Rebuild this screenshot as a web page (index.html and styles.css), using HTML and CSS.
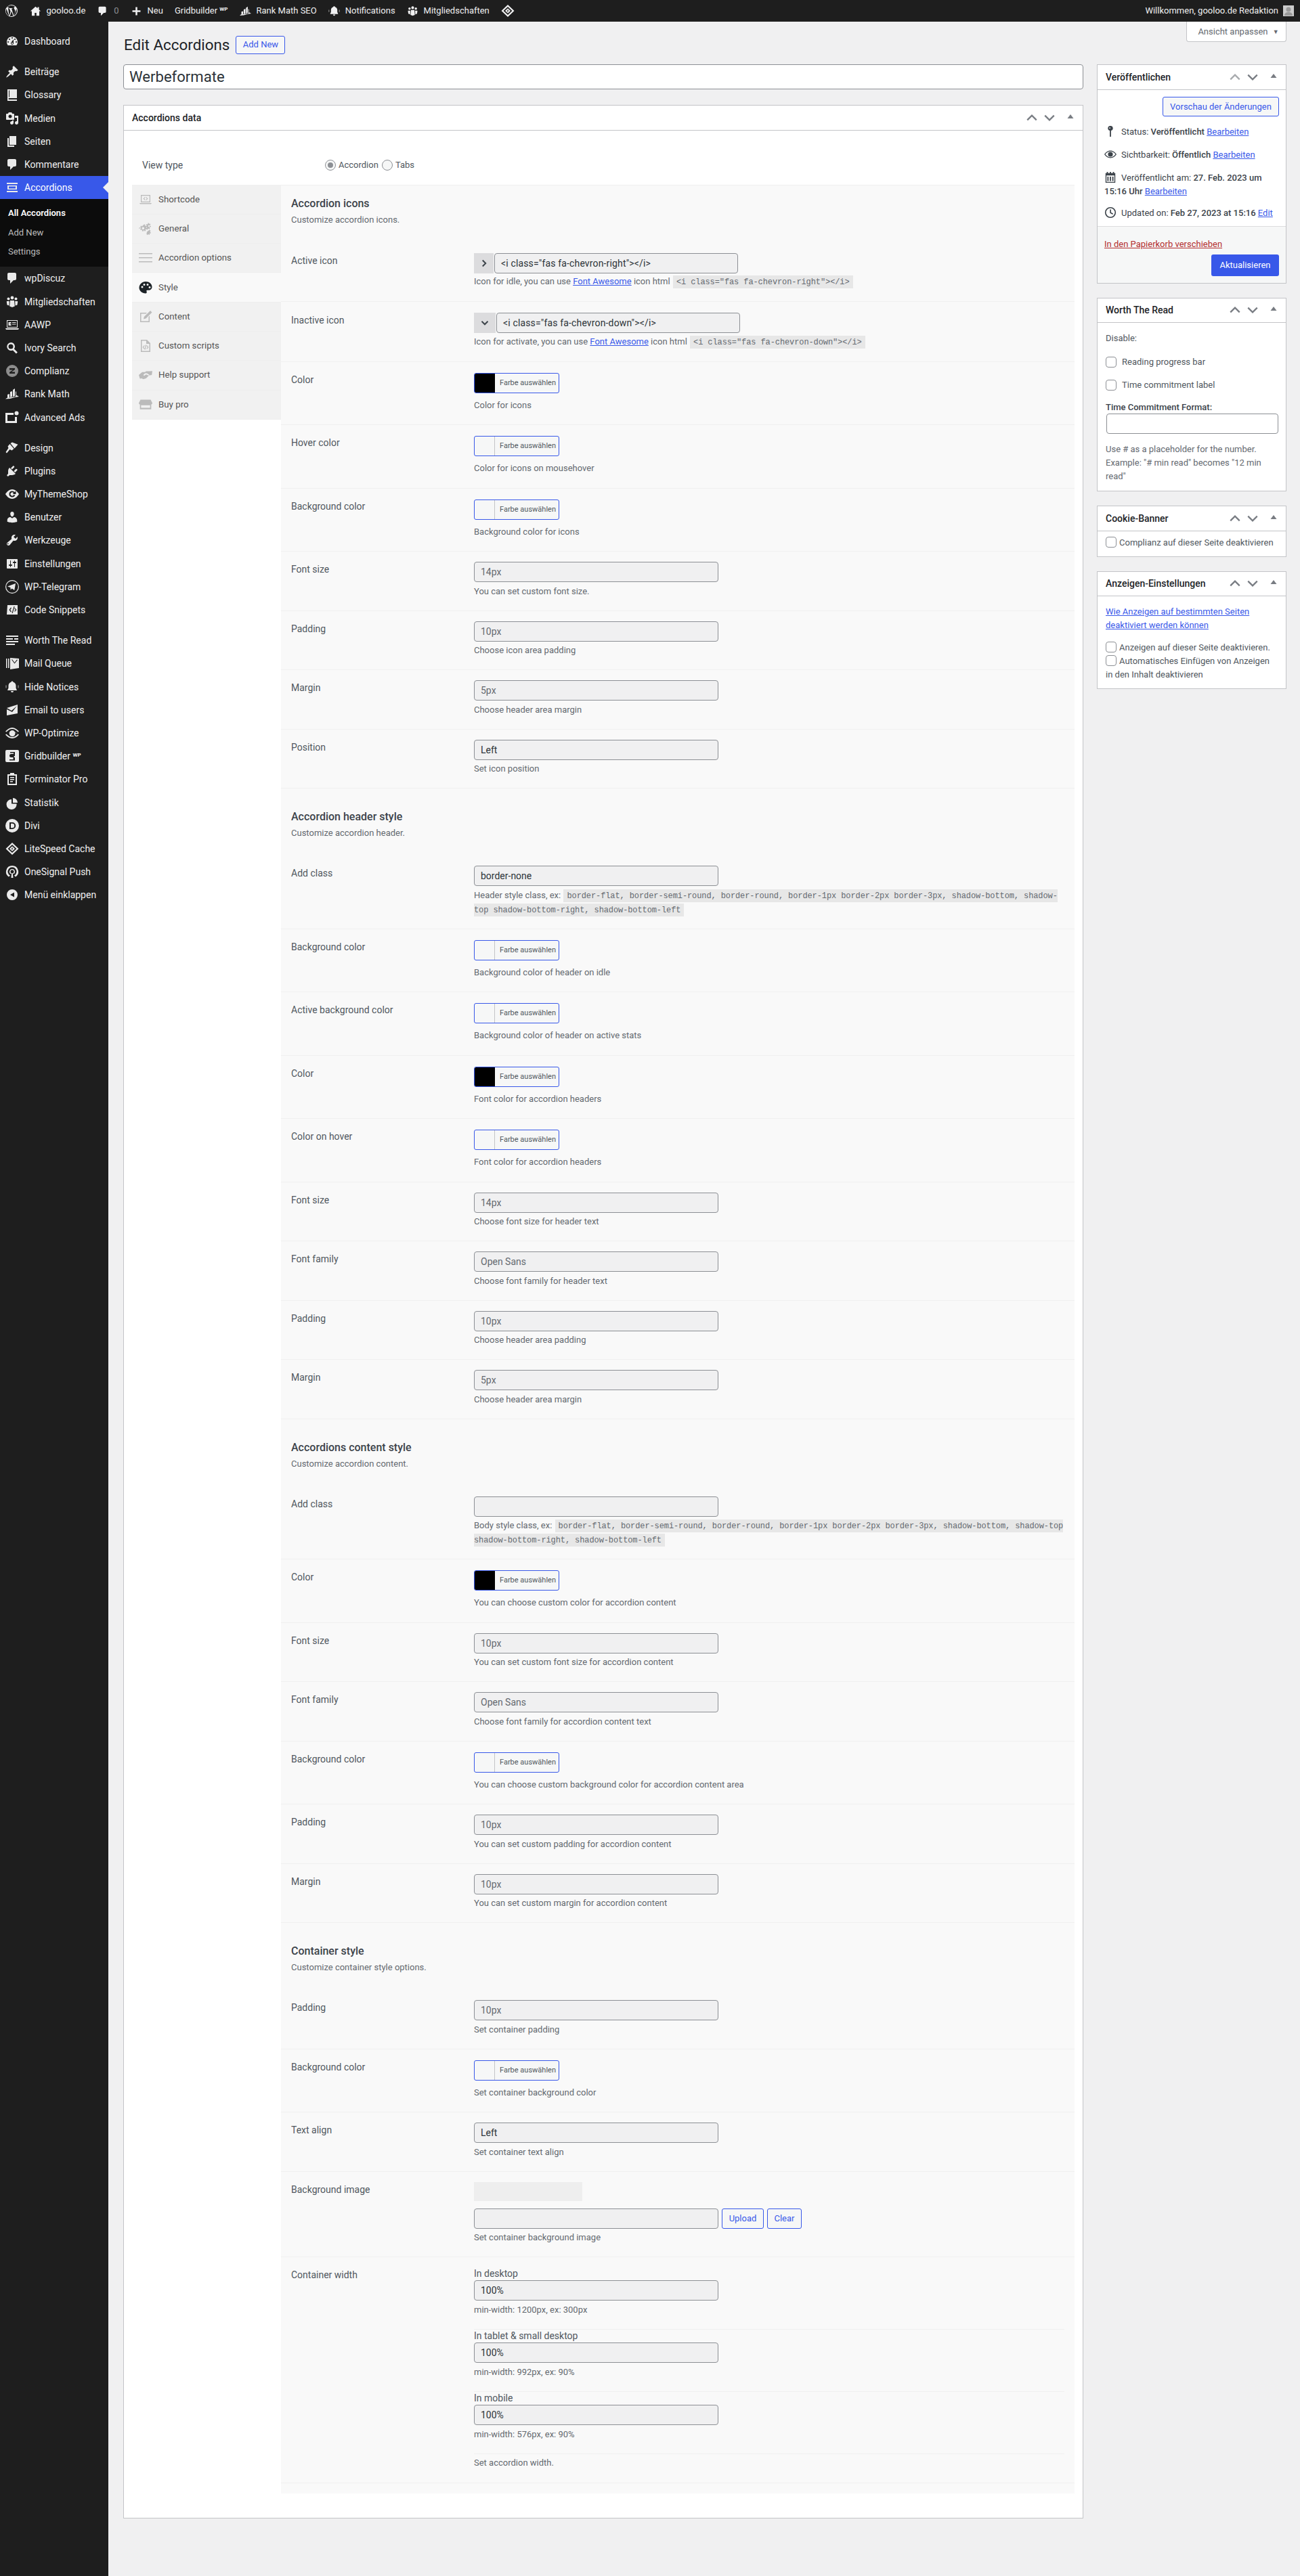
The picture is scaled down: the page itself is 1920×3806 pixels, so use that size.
FILE: index.html
```html
<!DOCTYPE html>
<html lang="de">
<head>
<meta charset="utf-8">
<title>Edit Accordions</title>
<link rel="stylesheet" href="styles.css">
</head>
<body>
<svg class="defs" aria-hidden="true">
  <symbol id="i-wp" viewBox="0 0 20 20"><path d="M10 1a9 9 0 1 0 0 18 9 9 0 0 0 0-18zm0 1a8 8 0 0 1 5.4 2.100c-1-.1-1.800.8-1.800 1.700 0 .8.500 1.500 1 2.300.4.700.8 1.600.8 2.800 0 .9-.3 1.900-.8 3.400l-1 3.100-3.500-10.500c.6 0 1.100-.1 1.100-.1.500-.1.500-.8 0-.8 0 0-1.600.1-2.600.1-1 0-2.500-.1-2.500-.1-.5 0-.6.700 0 .8 0 0 .5.100 1 .1l1.500 4.100-2.100 6.400L5 5.300c.6 0 1.100-.1 1.100-.1.500-.1.500-.8 0-.8 0 0-1.500.1-2.500.1h-.5A8 8 0 0 1 10 2zM2.500 7.100l3.800 10.500A8 8 0 0 1 2.500 7.100zm7.600 3.700 2.400 6.700v.1a8 8 0 0 1-4.900.1zm6.700-4.500A8 8 0 0 1 14 17l2.400-7c.5-1.200.6-2.100.6-2.900 0-.3 0-.6-.2-.8z"/></symbol>
  <symbol id="i-home" viewBox="0 0 20 20"><path d="M10 2 1 10h2.500v8h5v-5h3v5h5v-8H19l-3-2.700V3h-2.500v2.100z"/></symbol>
  <symbol id="i-plus" viewBox="0 0 20 20"><path d="M8.500 3h3v5.500H17v3h-5.500V17h-3v-5.500H3v-3h5.500z"/></symbol>
  <symbol id="i-rank" viewBox="0 0 20 20"><path d="M11 4l3-2v11l-3 1zM7 7l3-1v8l-3 1zM3 11l3-1v5l-3 1zM15 6l1 1v5l1.500.5L20 14l-6 1-7 2-7 .5 2-1.500 13-2z"/></symbol>
  <symbol id="i-bell" viewBox="0 0 20 20"><path d="M10 1.500c.8 0 1.400.5 1.500 1.200C14 3.400 15.500 5.500 15.500 8v3.500L17 15H3l1.500-3.500V8c0-2.500 1.500-4.600 4-5.300.1-.7.700-1.200 1.500-1.200zM8 16h4a2 2 0 0 1-4 0z"/><path d="M.5 7.500h1v4h-1zM18.500 7.500h1v4h-1z" opacity=".7"/></symbol>
  <symbol id="i-group" viewBox="0 0 20 20"><circle cx="10" cy="4" r="2.400"/><circle cx="4.500" cy="5.500" r="2"/><circle cx="15.500" cy="5.500" r="2"/><path d="M7 8h6l.8 8.500L10 18l-3.800-1.500zM2 9h3.800l-.4 6.500L2.500 14.500 1.800 10zM14.200 9H18l.2 1-.7 4.500-2.900 1z"/></symbol>
  <symbol id="i-diamond" viewBox="0 0 20 20"><path fill-rule="evenodd" d="M10 1 19.500 10 10 19 .5 10zm0 3-6.400 6L10 16l6.400-6zm0 2.200 4 3.800-4 3.800-4-3.800zm.6 1.300-2 3h1.200l-.5 2 2-3h-1.200z"/></symbol>
  <symbol id="i-dash" viewBox="0 0 20 20"><path d="M3.760 16h12.480c1.100-1.370 1.760-3.110 1.760-5 0-4.420-3.580-8-8-8s-8 3.580-8 8c0 1.890.66 3.630 1.760 5zM10 4c.55 0 1 .45 1 1s-.45 1-1 1-1-.45-1-1 .45-1 1-1zM6 6c.55 0 1 .45 1 1s-.45 1-1 1-1-.45-1-1 .45-1 1-1zm8 0c.55 0 1 .45 1 1s-.45 1-1 1-1-.45-1-1 .45-1 1-1zm-5.370 5.550L12 7v6c0 1.100-.9 2-2 2s-2-.9-2-2c0-.57.24-1.080.63-1.450zM4 10c.55 0 1 .45 1 1s-.45 1-1 1-1-.45-1-1 .45-1 1-1zm12 0c.55 0 1 .45 1 1s-.45 1-1 1-1-.45-1-1 .45-1 1-1zm-5 3c0-.55-.45-1-1-1s-1 .45-1 1 .45 1 1 1 1-.45 1-1z"/></symbol>
  <symbol id="i-pin" viewBox="0 0 20 20"><path d="M10.440 3.020l1.820-1.820 6.360 6.350-1.830 1.820c-1.050-.68-2.480-.57-3.410.36l-.75.750c-.92.93-1.040 2.350-.35 3.410l-1.830 1.820-2.410-2.410-2.800 2.790c-.42.42-3.380 2.710-3.800 2.290s1.860-3.390 2.280-3.810l2.790-2.790L4.100 9.360l1.830-1.820c1.050.69 2.480.57 3.400-.36l.75-.75c.93-.92 1.050-2.350.36-3.410z"/></symbol>
  <symbol id="i-book" viewBox="0 0 20 20"><path fill-rule="evenodd" d="M3 2h14v13H5.500a.9.9 0 0 0 0 2H17v2H3zm2 1.500v10h1v-10z"/></symbol>
  <symbol id="i-media" viewBox="0 0 20 20"><path d="M13 11V4c0-.55-.45-1-1-1h-1.670L9 1H5L3.670 3H2c-.55 0-1 .45-1 1v7c0 .55.45 1 1 1h10c.55 0 1-.45 1-1zM7 4.500c1.380 0 2.500 1.120 2.500 2.500S8.380 9.500 7 9.500 4.500 8.380 4.500 7 5.620 4.500 7 4.500zM14 6h5v10.500c0 1.380-1.120 2.500-2.500 2.500S14 17.880 14 16.500s1.120-2.500 2.500-2.500c.17 0 .34.020.5.050V9h-3V6zm-4 8.050V13h2v3.500c0 1.380-1.120 2.500-2.500 2.500S7 17.880 7 16.500 8.120 14 9.500 14c.17 0 .34.020.5.050z"/></symbol>
  <symbol id="i-page" viewBox="0 0 20 20"><path d="M6 15V2h10v13H6zm-1 1h8v2H3V5h2v11z"/></symbol>
  <symbol id="i-comment" viewBox="0 0 20 20"><path d="M5 2h9c1.100 0 2 .9 2 2v7c0 1.100-.9 2-2 2h-2l-5 5v-5H5c-1.100 0-2-.9-2-2V4c0-1.100.9-2 2-2z"/></symbol>
  <symbol id="i-acc" viewBox="0 0 20 20"><path fill-rule="evenodd" d="M2 3h16v2H2zM3 7h14v6H3zm2 1.500v3h10v-3zM2 15h16v2H2z"/></symbol>
  <symbol id="i-aawp" viewBox="0 0 20 20"><path fill-rule="evenodd" d="M2 3h16v11H2zm1 1v9h14V4zM0 15h20l-1 2H1zM4.500 6h4v2h-2v1h2v2h-4zM10 6h5.500v1H10zm0 2.500h5.500v1H10z"/></symbol>
  <symbol id="i-search" viewBox="0 0 20 20"><path fill-rule="evenodd" d="M8 2a6 6 0 0 1 4.900 9.400l5 5-2 2-5-5A6 6 0 1 1 8 2zm0 2.500a3.500 3.500 0 1 0 0 7 3.500 3.500 0 0 0 0-7z"/></symbol>
  <symbol id="i-cmplz" viewBox="0 0 20 20"><circle cx="10" cy="10" r="9" opacity=".55"/><path d="M6 6h8v2l-5 3.500h5V14H6v-2l5-3.500H6z" fill="#1e1e1e"/></symbol>
  <symbol id="i-ads" viewBox="0 0 20 20"><path fill-rule="evenodd" d="M0 3h12v3H3v9h11V9h3v9H0z"/><circle cx="16.500" cy="3.500" r="3"/></symbol>
  <symbol id="i-brush" viewBox="0 0 20 20"><path d="M7.500 3 10 1.500l8.500 3.300-5 5.700zM6.500 4l6 7-3 2.500-3-1.500L2 17.500 0.500 16 4.500 10 3.500 7.500z"/></symbol>
  <symbol id="i-plugin" viewBox="0 0 20 20"><path d="M13.110 4.360L9.870 7.600 8 5.730l3.240-3.240c.35-.34 1.050-.2 1.560.32.520.51.66 1.210.31 1.550zm-8 1.770l.91-1.120 9.010 9.010-1.190.84c-.71.71-2.630 1.160-3.820 1.160H6.140L4.900 17.260c-.59.59-1.540.59-2.120 0-.59-.58-.59-1.530 0-2.120l1.240-1.240v-3.880c0-1.130.4-3.190 1.090-3.890zm7.260 3.970l3.240-3.240c.34-.35 1.040-.21 1.550.31.520.51.66 1.210.31 1.550l-3.240 3.250z"/></symbol>
  <symbol id="i-mts" viewBox="0 0 20 20"><path fill-rule="evenodd" d="M10 3c5 0 8 4 10 7-2 3-5 7-10 7S2 13 0 10c2-3 5-7 10-7zm0 2.500a4.500 4.500 0 1 0 4.300 5.800h-2.100A2.500 2.500 0 1 1 12 8.500l-1 1.500h4.500V5.500L13.600 7A4.500 4.500 0 0 0 10 5.500z"/></symbol>
  <symbol id="i-user" viewBox="0 0 20 20"><path d="M10 9.250c-2.270 0-2.730-3.440-2.730-3.440C7 4.020 7.820 2 9.970 2c2.160 0 2.980 2.020 2.710 3.810 0 0-.41 3.440-2.680 3.440zm0 2.570L12.720 10c2.390 0 4.520 2.330 4.520 4.530v2.490s-3.650 1.130-7.240 1.130c-3.650 0-7.240-1.130-7.240-1.130v-2.490c0-2.250 1.940-4.480 4.470-4.480z"/></symbol>
  <symbol id="i-wrench" viewBox="0 0 20 20"><path d="M16.680 9.770c-1.340 1.340-3.300 1.670-4.950.99l-5.410 6.520c-.99.99-2.590.99-3.570 0-.99-.98-.99-2.580 0-3.570l6.520-5.420c-.68-1.650-.35-3.610.99-4.950 1.280-1.280 3.120-1.620 4.720-1.060l-2.890 2.890 2.820 2.820 2.860-2.870c.53 1.580.18 3.400-1.090 4.670zM4.360 16.050c.36-.36.36-.94 0-1.290-.36-.36-.94-.36-1.290 0-.36.35-.36.93 0 1.290.35.35.93.35 1.290 0z"/></symbol>
  <symbol id="i-sliders" viewBox="0 0 20 20"><path d="M18 16V4c0-.55-.45-1-1-1H3c-.55 0-1 .45-1 1v12c0 .55.45 1 1 1h14c.55 0 1-.45 1-1zM8 11h1c.55 0 1 .45 1 1s-.45 1-1 1H8v1.500c0 .28-.22.5-.5.5s-.5-.22-.5-.5V13H6c-.55 0-1-.45-1-1s.45-1 1-1h1V5.500c0-.28.22-.5.5-.5s.5.22.5.5V11zm5-2h-1c-.55 0-1-.45-1-1s.45-1 1-1h1V5.500c0-.28.22-.5.5-.5s.5.22.5.5V7h1c.55 0 1 .45 1 1s-.45 1-1 1h-1v5.500c0 .28-.22.5-.5.5s-.5-.22-.5-.5V9z"/></symbol>
  <symbol id="i-tele" viewBox="0 0 20 20"><path fill-rule="evenodd" d="M10 0a10 10 0 1 1 0 20 10 10 0 0 1 0-20zm0 1.200a8.800 8.800 0 1 0 0 17.600 8.800 8.800 0 0 0 0-17.600zM15 5l-1.700 10-3.800-2.500-1.800 2-.3-3.500L3 9.500z"/></symbol>
  <symbol id="i-code" viewBox="0 0 20 20"><path fill-rule="evenodd" d="M3 3h15v14H2zm5 3.500L5.500 10 8 13.500l1-.7L7.200 10 9 7.200zM12.500 5l-3 10h1.200l3-10zm1.500 2.300-.8.700L15 10l-1.800 2 .8.700L16.500 10z"/></symbol>
  <symbol id="i-lines" viewBox="0 0 20 20"><path d="M1 3h18v2H1zM1 7h10v2H1zM13 7h6v2h-6zM1 11h18v2H1zM1 15h13v2H1z"/></symbol>
  <symbol id="i-mail" viewBox="0 0 20 20"><path fill-rule="evenodd" d="M1 3h1.500v14H1zM4 3h1.500v14H4zM7 2l13 1v14L7 19zm2 2.500 4.500 6L18 5l-1-.5-3.500 4.500L10 4.200z"/></symbol>
  <symbol id="i-send" viewBox="0 0 20 20"><path d="M2 7l7 4 8-7-7 9L2 9v9l16-3V2L2 7z"/></symbol>
  <symbol id="i-opt" viewBox="0 0 20 20"><path fill-rule="evenodd" d="M10 2c4 0 7 2.500 10 5.500l-1.500 1C16 6 13.500 4 10 4S4 6 1.500 8.500L0 7.500C3 4.500 6 2 10 2zm0 4a4.500 4.500 0 0 1 3.900 2.300L20 12.500C17 15.500 14 18 10 18S3 15.500 0 12.500l1.500-1C4 14 6.500 16 10 16s6-2 8.500-4.500L14.300 9A4.500 4.500 0 1 1 10 6z"/></symbol>
  <symbol id="i-grid" viewBox="0 0 20 20"><path fill-rule="evenodd" d="M2 1h16a2 2 0 0 1 2 2v14a2 2 0 0 1-2 2H2a2 2 0 0 1-2-2V3a2 2 0 0 1 2-2zm5 3v1.500h5V7H8.500a2.500 2.500 0 0 0 0 5h3V15H6v1.500h8V12h-2a1 1 0 0 0 0-2h2V4z"/></symbol>
  <symbol id="i-form" viewBox="0 0 20 20"><path fill-rule="evenodd" d="M7 1h6v2h4v16H3V3h4zM5 5v12h10V5zm2 2h6v1.500H7zm0 3h6v1.500H7zm0 3h4v1.500H7z"/></symbol>
  <symbol id="i-pie" viewBox="0 0 20 20"><path d="M11 3a7 7 0 0 1 7 7h-7zM9 5v6.500h7.500A7.500 7.500 0 1 1 9 5z"/></symbol>
  <symbol id="i-divi" viewBox="0 0 20 20"><path fill-rule="evenodd" d="M10 0a10 10 0 1 1 0 20 10 10 0 0 1 0-20zM6 5v10h4.200a5 5 0 0 0 0-10zm2 1.800h2a3.200 3.200 0 0 1 0 6.400H8z"/></symbol>
  <symbol id="i-one" viewBox="0 0 20 20"><path fill-rule="evenodd" d="M10 1a9 9 0 0 1 5 16.500l-2-2a6.500 6.500 0 1 0-6 0l-2 2A9 9 0 0 1 10 1zm0 5a4 4 0 0 1 2 7.500l-.9-1.400a2.500 2.500 0 1 0-2.200 0L8 13.500A4 4 0 0 1 10 6zm-.8 6h1.600l.7 7H8.500z"/></symbol>
  <symbol id="i-collapse" viewBox="0 0 20 20"><path fill-rule="evenodd" d="M10 2a8 8 0 1 1 0 16 8 8 0 0 1 0-16zm3 4.500L7 10l6 3.500z"/></symbol>
  <symbol id="i-screen" viewBox="0 0 20 20"><path fill-rule="evenodd" d="M3 3h14v11H3zm1.200 1.200v8.600h11.600V4.200zM1 15h18l-1 1.500H2zM9 6 6.500 8.500 9 11l.7-.7L8 8.500l1.700-1.800zm2 0-.7.700L12 8.500l-1.700 1.800.7.700 2.500-2.500z"/></symbol>
  <symbol id="i-gears" viewBox="0 0 22 20"><path d="M7 4l1 .2.500-1.700 2 .8-.5 1.600.8.700 1.600-.8 1 1.900-1.500.9.100 1 1.700.5-.7 2-1.700-.5-.6.800.8 1.600-1.900 1-.9-1.500-1 .1-.5 1.700-2-.7.500-1.700-.8-.6-1.600.8-1-1.900 1.500-.9v-1L.3 9.900l.7-2 1.700.5.600-.8-.8-1.600 1.900-1 .9 1.500zm0 3.200a2 2 0 1 0 0 4 2 2 0 0 0 0-4zM16.500 1l.7 1.300 1.300-.5.600 1.400-1.200.8.300 1.400 1.400.3-.2 1.500-1.500.1-.6 1.300.9 1.100-1.200 1-1.100-1-1.300.5-.3 1.400-1.300-.3V7.500l-.5-1 .7-.6-.3-1.400-1.100-.7.700-1.400 1.300.4 1-.9.300-1.500zm0 3.300a1.300 1.300 0 1 0 0 2.600 1.300 1.300 0 0 0 0-2.600zM17 11.500l.6 1.100 1.200-.2.400 1.300-1 .8.300 1.200 1.200.4-.3 1.300-1.200-.1-.8 1 .5 1.100-1.200.6-.8-1-1.300.1-.5 1.100-1.200-.5.200-1.200-.9-.8 1-1.200-.4-1.200 1.200-.5.300-1.200 1.200.1z"/></symbol>
  <symbol id="i-list" viewBox="0 0 20 20"><path d="M0 3h20v1.500H0zM0 9h20v1.500H0zM0 15h20v1.500H0z"/></symbol>
  <symbol id="i-palette" viewBox="0 0 20 20"><path fill-rule="evenodd" d="M10 1c5.500 0 9.500 3.500 9.500 8 0 3-2.300 4.800-5 4.800h-2c-1 0-1.500.8-1 1.600.5.900.4 3.100-1.500 3.100C4.800 18.500.5 14.800.5 10 .5 5 5 1 10 1zM5 7.500a1.500 1.500 0 1 0 0 3 1.500 1.500 0 0 0 0-3zm3-3.500a1.500 1.500 0 1 0 0 3 1.500 1.500 0 0 0 0-3zm5 0a1.500 1.500 0 1 0 0 3 1.500 1.500 0 0 0 0-3zm3 4a1.500 1.500 0 1 0 0 3 1.500 1.500 0 0 0 0-3z"/></symbol>
  <symbol id="i-edit" viewBox="0 0 20 20"><path fill-rule="evenodd" d="M2 4h10l-1.500 1.500H3.500v11h11V10l1.500-1.500V18H2zM17 1l2.500 2.500-9 9L7 13.500l.8-3.500z"/></symbol>
  <symbol id="i-file" viewBox="0 0 20 20"><path fill-rule="evenodd" d="M3 1h9l5 5v13H3zm1.500 1.500v15h11V7H11V2.500zM8 9l-2.500 3L8 15l.8-.7L7 12l1.800-2.300zm4 0-.8.700L13 12l-1.800 2.300.8.700 2.500-3zm-2-.5-1.500 7h1.200l1.500-7z"/></symbol>
  <symbol id="i-hands" viewBox="0 0 24 20"><path d="M0 10l6-5 5 0 2-1.500 4 0 7-.5-1 7-5 1-5 5-5 1.500-3-1.500-3 .5zM11 7l-3 3 1.500 1.500L13 9l4 2 2-1-4.500-3z"/></symbol>
  <symbol id="i-store" viewBox="0 0 24 20"><path fill-rule="evenodd" d="M3 1h18l3 6c0 1.500-1.200 2.500-2 2.500v8.500H2V9.500C1.200 9.500 0 8.500 0 7zm1 10v4.500h16V11z"/></symbol>
  <symbol id="i-key" viewBox="0 0 20 20"><path d="M10 1a4 4 0 0 1 1 7.900V19H9V8.900A4 4 0 0 1 10 1zM9 3.500a1 1 0 1 0 0 2 1 1 0 0 0 0-2z"/></symbol>
  <symbol id="i-eye" viewBox="0 0 20 20"><path fill-rule="evenodd" d="M10 4c4.500 0 8 3 10 6-2 3-5.500 6-10 6S2 13 0 10c2-3 5.500-6 10-6zm0 1.300c-3.500 0-6.500 2.200-8.300 4.700 1.800 2.500 4.800 4.700 8.300 4.700s6.500-2.200 8.300-4.700c-1.800-2.500-4.800-4.700-8.300-4.700zM10 6a4 4 0 1 1 0 8 4 4 0 0 1 0-8z"/></symbol>
  <symbol id="i-cal" viewBox="0 0 20 20"><path fill-rule="evenodd" d="M2 3h2V1h2v2h3V1h2v2h3V1h2v2h2v16H2zm1.500 4v10.500h13V7zM5 9h2v7H5zm4 0h2v7H9zm4 0h2v7h-2z"/></symbol>
  <symbol id="i-clock" viewBox="0 0 20 20"><path fill-rule="evenodd" d="M10 1a9 9 0 1 1 0 18 9 9 0 0 1 0-18zm0 1.800a7.200 7.200 0 1 0 0 14.400 7.200 7.200 0 0 0 0-14.400zM9.200 5H11v4.800l3.500 2-.9 1.500-4.400-2.500z"/></symbol>
  <symbol id="i-up" viewBox="0 0 16 16"><path d="M2 11l6-6 6 6" fill="none" stroke="currentColor" stroke-width="2"/></symbol>
  <symbol id="i-down" viewBox="0 0 16 16"><path d="M2 5l6 6 6-6" fill="none" stroke="currentColor" stroke-width="2"/></symbol>
  <symbol id="i-tri" viewBox="0 0 16 16"><path d="M8 4l4.500 6h-9z"/></symbol>
  <symbol id="i-cr" viewBox="0 0 16 16"><path d="M5 2l6 6-6 6" fill="none" stroke="currentColor" stroke-width="2.600"/></symbol>
  <symbol id="i-cd" viewBox="0 0 16 16"><path d="M2 5l6 6 6-6" fill="none" stroke="currentColor" stroke-width="2.600"/></symbol>
  <symbol id="i-avatar" viewBox="0 0 16 16"><path d="M0 0h16v16H0z" fill="#ccc"/><circle cx="8" cy="6" r="3.500" fill="#999"/><path d="M2 15c0-4 3-5 6-5s6 1 6 5z" fill="#999"/></symbol>
</svg>

<header class="adminbar">
  <a class="ab ab-first"><svg class="ab-i ab-big"><use href="#i-wp"/></svg></a>
  <a class="ab"><svg class="ab-i"><use href="#i-home"/></svg><span>gooloo.de</span></a>
  <a class="ab"><svg class="ab-i"><use href="#i-comment"/></svg><span class="ab-zero">0</span></a>
  <a class="ab"><svg class="ab-i"><use href="#i-plus"/></svg><span>Neu</span></a>
  <a class="ab"><span>Gridbuilder <sup class="wp-sup">WP</sup></span></a>
  <a class="ab"><svg class="ab-i"><use href="#i-rank"/></svg><span>Rank Math SEO</span></a>
  <a class="ab"><svg class="ab-i"><use href="#i-bell"/></svg><span>Notifications</span></a>
  <a class="ab"><svg class="ab-i"><use href="#i-group"/></svg><span>Mitgliedschaften</span></a>
  <a class="ab"><svg class="ab-i ab-big"><use href="#i-diamond"/></svg></a>
  <a class="ab ab-right"><span>Willkommen, gooloo.de Redaktion</span><svg class="ab-avatar"><use href="#i-avatar"/></svg></a>
</header>

<div class="wrap">
  <nav class="sidebar">
    <a class="mi"><svg><use href="#i-dash"/></svg><span>Dashboard</span></a>
    <div class="sep"></div>
    <a class="mi"><svg><use href="#i-pin"/></svg><span>Beiträge</span></a>
    <a class="mi"><svg><use href="#i-book"/></svg><span>Glossary</span></a>
    <a class="mi"><svg><use href="#i-media"/></svg><span>Medien</span></a>
    <a class="mi"><svg><use href="#i-page"/></svg><span>Seiten</span></a>
    <a class="mi"><svg><use href="#i-comment"/></svg><span>Kommentare</span></a>
    <a class="mi mi-active"><svg><use href="#i-acc"/></svg><span>Accordions</span></a>
    <div class="submenu">
      <a class="sub sub-on">All Accordions</a>
      <a class="sub">Add New</a>
      <a class="sub">Settings</a>
    </div>
    <a class="mi"><svg><use href="#i-comment"/></svg><span>wpDiscuz</span></a>
    <a class="mi"><svg><use href="#i-group"/></svg><span>Mitgliedschaften</span></a>
    <a class="mi"><svg><use href="#i-aawp"/></svg><span>AAWP</span></a>
    <a class="mi"><svg><use href="#i-search"/></svg><span>Ivory Search</span></a>
    <a class="mi"><svg><use href="#i-cmplz"/></svg><span>Complianz</span></a>
    <a class="mi"><svg><use href="#i-rank"/></svg><span>Rank Math</span></a>
    <a class="mi"><svg><use href="#i-ads"/></svg><span>Advanced Ads</span></a>
    <div class="sep"></div>
    <a class="mi"><svg><use href="#i-brush"/></svg><span>Design</span></a>
    <a class="mi"><svg><use href="#i-plugin"/></svg><span>Plugins</span></a>
    <a class="mi"><svg><use href="#i-mts"/></svg><span>MyThemeShop</span></a>
    <a class="mi"><svg><use href="#i-user"/></svg><span>Benutzer</span></a>
    <a class="mi"><svg><use href="#i-wrench"/></svg><span>Werkzeuge</span></a>
    <a class="mi"><svg><use href="#i-sliders"/></svg><span>Einstellungen</span></a>
    <a class="mi"><svg><use href="#i-tele"/></svg><span>WP-Telegram</span></a>
    <a class="mi"><svg><use href="#i-code"/></svg><span>Code Snippets</span></a>
    <div class="sep"></div>
    <a class="mi"><svg><use href="#i-lines"/></svg><span>Worth The Read</span></a>
    <a class="mi"><svg><use href="#i-mail"/></svg><span>Mail Queue</span></a>
    <a class="mi"><svg><use href="#i-bell"/></svg><span>Hide Notices</span></a>
    <a class="mi"><svg><use href="#i-send"/></svg><span>Email to users</span></a>
    <a class="mi"><svg><use href="#i-opt"/></svg><span>WP-Optimize</span></a>
    <a class="mi"><svg><use href="#i-grid"/></svg><span>Gridbuilder <sup class="wp-sup">WP</sup></span></a>
    <a class="mi"><svg><use href="#i-form"/></svg><span>Forminator Pro</span></a>
    <a class="mi"><svg><use href="#i-pie"/></svg><span>Statistik</span></a>
    <a class="mi"><svg><use href="#i-divi"/></svg><span>Divi</span></a>
    <a class="mi"><svg><use href="#i-diamond"/></svg><span>LiteSpeed Cache</span></a>
    <a class="mi"><svg><use href="#i-one"/></svg><span>OneSignal Push</span></a>
    <a class="mi"><svg><use href="#i-collapse"/></svg><span>Menü einklappen</span></a>
  </nav>

  <main class="main">
    <button class="screen-opt">Ansicht anpassen <span class="caret">▼</span></button>
    <div class="heading">
      <h1>Edit Accordions</h1>
      <a class="btn-add">Add New</a>
    </div>
    <div class="columns">
      <div class="col-left">
        <div class="title-input">Werbeformate</div>
        <section class="postbox">
          <div class="pb-head">
            <h2>Accordions data</h2>
            <div class="handles">
              <svg><use href="#i-up"/></svg><svg><use href="#i-down"/></svg><svg class="h-tri"><use href="#i-tri"/></svg>
            </div>
          </div>
          <div class="pb-body">
            <div class="view-type">
              <div class="view-label">View type</div>
              <div class="radios">
                <span class="radio radio-on"></span><span>Accordion</span>
                <span class="radio"></span><span>Tabs</span>
              </div>
            </div>
            <div class="panel">
              <ul class="tabs">
                <li class="tab"><svg><use href="#i-screen"/></svg>Shortcode</li>
                <li class="tab"><svg><use href="#i-gears"/></svg>General</li>
                <li class="tab"><svg><use href="#i-list"/></svg>Accordion options</li>
                <li class="tab tab-on"><svg><use href="#i-palette"/></svg>Style</li>
                <li class="tab"><svg><use href="#i-edit"/></svg>Content</li>
                <li class="tab"><svg><use href="#i-file"/></svg>Custom scripts</li>
                <li class="tab"><svg><use href="#i-hands"/></svg>Help support</li>
                <li class="tab"><svg><use href="#i-store"/></svg>Buy pro</li>
              </ul>
              <div class="content">

                <div class="sec sec-first"><h3>Accordion icons</h3><p>Customize accordion icons.</p></div>
                <div class="row row-icon">
                  <div class="lbl">Active icon</div>
                  <div>
                    <div class="icon-field"><span class="addon"><svg><use href="#i-cr"/></svg></span><div class="field field-i">&lt;i class="fas fa-chevron-right"&gt;&lt;/i&gt;</div></div>
                    <div class="hint hint-tight">Icon for idle, you can use <a>Font Awesome</a> icon html <code>&lt;i class="fas fa-chevron-right"&gt;&lt;/i&gt;</code></div>
                  </div>
                </div>
                <div class="row row-icon">
                  <div class="lbl">Inactive icon</div>
                  <div>
                    <div class="icon-field"><span class="addon addon-w"><svg><use href="#i-cd"/></svg></span><div class="field field-i">&lt;i class="fas fa-chevron-down"&gt;&lt;/i&gt;</div></div>
                    <div class="hint hint-tight">Icon for activate, you can use <a>Font Awesome</a> icon html <code>&lt;i class="fas fa-chevron-down"&gt;&lt;/i&gt;</code></div>
                  </div>
                </div>
                <div class="row row-sw"><div class="lbl">Color</div><div><div class="swatch"><span class="sw-c sw-black"></span><span class="sw-t">Farbe auswählen</span></div><div class="hint">Color for icons</div></div></div>
                <div class="row row-sw"><div class="lbl">Hover color</div><div><div class="swatch"><span class="sw-c"></span><span class="sw-t">Farbe auswählen</span></div><div class="hint">Color for icons on mousehover</div></div></div>
                <div class="row row-sw"><div class="lbl">Background color</div><div><div class="swatch"><span class="sw-c"></span><span class="sw-t">Farbe auswählen</span></div><div class="hint">Background color for icons</div></div></div>
                <div class="row"><div class="lbl">Font size</div><div><div class="field ph">14px</div><div class="hint">You can set custom font size.</div></div></div>
                <div class="row"><div class="lbl">Padding</div><div><div class="field ph">10px</div><div class="hint">Choose icon area padding</div></div></div>
                <div class="row"><div class="lbl">Margin</div><div><div class="field ph">5px</div><div class="hint">Choose header area margin</div></div></div>
                <div class="row"><div class="lbl">Position</div><div><div class="field">Left</div><div class="hint">Set icon position</div></div></div>

                <div class="sec"><h3>Accordion header style</h3><p>Customize accordion header.</p></div>
                <div class="row"><div class="lbl">Add class</div><div><div class="field">border-none</div><div class="hint">Header style class, ex: <code>border-flat, border-semi-round, border-round, border-1px border-2px border-3px, shadow-bottom, shadow-top shadow-bottom-right, shadow-bottom-left</code></div></div></div>
                <div class="row row-sw"><div class="lbl">Background color</div><div><div class="swatch"><span class="sw-c"></span><span class="sw-t">Farbe auswählen</span></div><div class="hint">Background color of header on idle</div></div></div>
                <div class="row row-sw"><div class="lbl">Active background color</div><div><div class="swatch"><span class="sw-c"></span><span class="sw-t">Farbe auswählen</span></div><div class="hint">Background color of header on active stats</div></div></div>
                <div class="row row-sw"><div class="lbl">Color</div><div><div class="swatch"><span class="sw-c sw-black"></span><span class="sw-t">Farbe auswählen</span></div><div class="hint">Font color for accordion headers</div></div></div>
                <div class="row row-sw"><div class="lbl">Color on hover</div><div><div class="swatch"><span class="sw-c"></span><span class="sw-t">Farbe auswählen</span></div><div class="hint">Font color for accordion headers</div></div></div>
                <div class="row"><div class="lbl">Font size</div><div><div class="field ph">14px</div><div class="hint">Choose font size for header text</div></div></div>
                <div class="row"><div class="lbl">Font family</div><div><div class="field ph">Open Sans</div><div class="hint">Choose font family for header text</div></div></div>
                <div class="row"><div class="lbl">Padding</div><div><div class="field ph">10px</div><div class="hint">Choose header area padding</div></div></div>
                <div class="row"><div class="lbl">Margin</div><div><div class="field ph">5px</div><div class="hint">Choose header area margin</div></div></div>

                <div class="sec"><h3>Accordions content style</h3><p>Customize accordion content.</p></div>
                <div class="row"><div class="lbl">Add class</div><div><div class="field"></div><div class="hint">Body style class, ex: <code>border-flat, border-semi-round, border-round, border-1px border-2px border-3px, shadow-bottom, shadow-top shadow-bottom-right, shadow-bottom-left</code></div></div></div>
                <div class="row row-sw"><div class="lbl">Color</div><div><div class="swatch"><span class="sw-c sw-black"></span><span class="sw-t">Farbe auswählen</span></div><div class="hint">You can choose custom color for accordion content</div></div></div>
                <div class="row"><div class="lbl">Font size</div><div><div class="field ph">10px</div><div class="hint">You can set custom font size for accordion content</div></div></div>
                <div class="row"><div class="lbl">Font family</div><div><div class="field ph">Open Sans</div><div class="hint">Choose font family for accordion content text</div></div></div>
                <div class="row row-sw"><div class="lbl">Background color</div><div><div class="swatch"><span class="sw-c"></span><span class="sw-t">Farbe auswählen</span></div><div class="hint">You can choose custom background color for accordion content area</div></div></div>
                <div class="row"><div class="lbl">Padding</div><div><div class="field ph">10px</div><div class="hint">You can set custom padding for accordion content</div></div></div>
                <div class="row"><div class="lbl">Margin</div><div><div class="field ph">10px</div><div class="hint">You can set custom margin for accordion content</div></div></div>

                <div class="sec"><h3>Container style</h3><p>Customize container style options.</p></div>
                <div class="row"><div class="lbl">Padding</div><div><div class="field ph">10px</div><div class="hint">Set container padding</div></div></div>
                <div class="row row-sw"><div class="lbl">Background color</div><div><div class="swatch"><span class="sw-c"></span><span class="sw-t">Farbe auswählen</span></div><div class="hint">Set container background color</div></div></div>
                <div class="row"><div class="lbl">Text align</div><div><div class="field">Left</div><div class="hint">Set container text align</div></div></div>
                <div class="row"><div class="lbl">Background image</div><div>
                  <div class="img-box"></div>
                  <div class="upload-line"><div class="field"></div><a class="btn-sm btn-up">Upload</a><a class="btn-sm btn-cl">Clear</a></div>
                  <div class="hint">Set container background image</div>
                </div></div>
                <div class="row row-width"><div class="lbl">Container width</div><div>
                  <div class="wblock"><div class="wlabel">In desktop</div><div class="field">100%</div><div class="hint">min-width: 1200px, ex: 300px</div></div>
                  <div class="wblock"><div class="wlabel">In tablet &amp; small desktop</div><div class="field">100%</div><div class="hint">min-width: 992px, ex: 90%</div></div>
                  <div class="wblock"><div class="wlabel">In mobile</div><div class="field">100%</div><div class="hint">min-width: 576px, ex: 90%</div></div>
                  <div class="hint hint-end">Set accordion width.</div>
                </div></div>
              </div>
            </div>
          </div>
        </section>
      </div>

      <aside class="col-right">
        <section class="box">
          <div class="box-head"><h2>Veröffentlichen</h2><div class="handles"><svg class="h-off"><use href="#i-up"/></svg><svg><use href="#i-down"/></svg><svg class="h-tri"><use href="#i-tri"/></svg></div></div>
          <div class="pub">
            <div class="pub-prev"><a class="btn-prev">Vorschau der Änderungen</a></div>
            <div class="pub-line pl-status"><svg><use href="#i-key"/></svg>Status: <b>Veröffentlicht</b> <a>Bearbeiten</a></div>
            <div class="pub-line pl-vis"><svg><use href="#i-eye"/></svg>Sichtbarkeit: <b>Öffentlich</b> <a>Bearbeiten</a></div>
            <div class="pub-line pl-date"><svg><use href="#i-cal"/></svg>Veröffentlicht am: <b>27. Feb. 2023 um 15:16 Uhr</b> <a>Bearbeiten</a></div>
            <div class="pub-line pl-upd"><svg><use href="#i-clock"/></svg>Updated on: <b>Feb 27, 2023 at 15:16</b> <a>Edit</a></div>
          </div>
          <div class="pub-foot">
            <a class="trash">In den Papierkorb verschieben</a>
            <div class="pub-act"><a class="btn-primary">Aktualisieren</a></div>
          </div>
        </section>

        <section class="box">
          <div class="box-head"><h2>Worth The Read</h2><div class="handles"><svg><use href="#i-up"/></svg><svg><use href="#i-down"/></svg><svg class="h-tri"><use href="#i-tri"/></svg></div></div>
          <div class="worth">
            <div class="w-dis">Disable:</div>
            <div class="w-check"><span class="cb"></span>Reading progress bar</div>
            <div class="w-check"><span class="cb"></span>Time commitment label</div>
            <div class="w-fmt">Time Commitment Format:</div>
            <div class="w-input"></div>
            <p class="w-help">Use # as a placeholder for the number. Example: "# min read" becomes "12 min read"</p>
          </div>
        </section>

        <section class="box">
          <div class="box-head"><h2>Cookie-Banner</h2><div class="handles"><svg><use href="#i-up"/></svg><svg><use href="#i-down"/></svg><svg class="h-tri"><use href="#i-tri"/></svg></div></div>
          <div class="cookie"><span class="cb cb-near"></span>Complianz auf dieser Seite deaktivieren</div>
        </section>

        <section class="box">
          <div class="box-head"><h2>Anzeigen-Einstellungen</h2><div class="handles"><svg><use href="#i-up"/></svg><svg><use href="#i-down"/></svg><svg class="h-tri"><use href="#i-tri"/></svg></div></div>
          <div class="ads">
            <a class="ads-link">Wie Anzeigen auf bestimmten Seiten deaktiviert werden können</a>
            <div class="ads-opts">
              <div><span class="cb cb-near"></span>Anzeigen auf dieser Seite deaktivieren.</div>
              <div><span class="cb cb-near"></span>Automatisches Einfügen von Anzeigen in den Inhalt deaktivieren</div>
            </div>
          </div>
        </section>
      </aside>
    </div>
  </main>
</div>
</body>
</html>
```

FILE: styles.css
```css
* { box-sizing: border-box; }
html, body { margin: 0; height: 100%; }
body {
  background: #f0f0f1;
  color: #3c434a;
  font: 13px/20px Roboto, "Noto Sans", sans-serif;
}
a { color: #3858e9; }
h1, h2, h3, p, ul { margin: 0; padding: 0; }
.defs { display: none; }

/* admin bar */
.adminbar {
  height: 32px;
  background: #1e1e1e;
  color: #f0f0f1;
  display: flex;
  align-items: center;
  padding-left: 7px;
}
.ab { display: flex; align-items: center; gap: 8px; color: #f0f0f1; padding: 0 8.500px; }
.ab-first { padding: 0 8px 0 0; }
.ab-i { width: 17px; height: 17px; fill: #f0f0f1; }
.ab-big { width: 20px; height: 20px; }
.ab-zero { color: #8c8f94; }
.ab-right { margin-left: auto; padding: 0 9px 0 0; gap: 7px; }
.ab-avatar { width: 16px; height: 16px; }
.wp-sup { font-size: 8px; line-height: 0; font-weight: 700; vertical-align: 4px; }

.wrap { display: flex; min-height: calc(100% - 32px); }

/* sidebar */
.sidebar {
  width: 160px;
  flex: none;
  background: #1e1e1e;
  padding-top: 12px;
}
.mi {
  display: flex;
  align-items: center;
  height: 34.200px;
  color: #f0f0f1;
  font-size: 14px;
  position: relative;
}
.mi svg { width: 20px; height: 20px; margin: 0 8px; fill: #eaeaea; flex: none; }
.mi-active { background: #3858e9; color: #fff; }
.mi-active::after {
  content: "";
  position: absolute;
  right: 0;
  top: 9px;
  border: 8px solid transparent;
  border-right-color: #f0f0f1;
  border-left-width: 0;
}
.sep { height: 11px; }
.submenu { background: #0c0c0c; padding: 7px 0 7.500px; }
.sub { display: block; height: 28.500px; line-height: 28px; padding-left: 12px; color: #bbb; }
.sub-on { color: #fff; font-weight: 600; }

/* main */
.main { flex: 1; position: relative; padding: 21px 20px 0 22px; min-width: 0; }
.screen-opt {
  position: absolute;
  top: 0;
  right: 20px;
  width: 148px;
  height: 30px;
  background: #fff;
  border: 1px solid #c3c4c7;
  border-top: 0;
  border-radius: 0 0 4px 4px;
  color: #646970;
  font: 13px/20px Roboto, sans-serif;
  padding: 0 0 0 6px;
}
.caret { font-size: 9px; margin-left: 4px; vertical-align: 1px; }
.heading { display: flex; align-items: center; height: 26.500px; margin-bottom: 15.500px; gap: 9px; padding-left: 1px; }
h1 { font-size: 22.400px; font-weight: 400; line-height: 26px; color: #1d2327; }
.btn-add {
  width: 73px;
  height: 26.500px;
  line-height: 24px;
  border: 1px solid #3858e9;
  border-radius: 3px;
  text-align: center;
  background: #f6f7f7;
}
.columns { display: grid; grid-template-columns: 1fr 280px; gap: 20px; align-items: start; }
.title-input {
  height: 37px;
  background: #fff;
  border: 1px solid #8c8f94;
  border-radius: 4px;
  font-size: 22.100px;
  line-height: 35px;
  padding-left: 8px;
  color: #2c3338;
  margin-bottom: 23px;
}

/* postbox */
.postbox { background: #fff; border: 1px solid #c3c4c7; }
.pb-head, .box-head {
  display: flex;
  align-items: center;
  justify-content: space-between;
  height: 36.500px;
  border-bottom: 1px solid #c3c4c7;
  padding: 0 12px;
}
h2 { font-size: 14px; font-weight: 500; line-height: 20px; color: #1d2327; }
.handles { display: flex; align-items: center; gap: 8px; margin-right: -2px; color: #787c82; }
.handles svg { width: 18px; height: 18px; color: #787c82; fill: #787c82; }
.handles .h-off { color: #a7aaad; }
.handles .h-tri { width: 16px; height: 16px; margin-left: 6px; margin-top: -2px; }
.pb-body { padding: 0 12px 36px; }
.view-type { display: grid; grid-template-columns: 270px 1fr; padding: 41px 15px 20px; line-height: 20px; font-size: 14px; color: #50575e; }
.radios { display: flex; align-items: center; gap: 4px; font-size: 13px; }
.radio {
  width: 16px;
  height: 16px;
  border: 1px solid #8c8f94;
  border-radius: 50%;
  background: #f6f7f7;
  margin-left: 0;
  position: relative;
}
.radios span:nth-child(3) { margin-left: 1px; }
.radio-on::before {
  content: "";
  position: absolute;
  inset: 3px;
  border-radius: 50%;
  background: #8c8f94;
}

.panel { display: flex; border-top: 1px solid #f0f0f0; margin-top: -1px; }
.tabs { list-style: none; width: 220px; flex: none; align-self: flex-start; background: #f1f1f1; }
.tab {
  display: flex;
  align-items: center;
  height: 43.300px;
  padding-left: 10px;
  font-size: 13.300px;
  color: #555;
  border-bottom: 1px solid #eee;
}
.tab svg { width: 20px; height: 20px; margin-right: 9px; fill: #bbb; flex: none; }
.tab-on { background: #f9f9f9; }
.tab-on svg { fill: #1d2327; }
.content { flex: 1; background: #f9f9f9; padding-bottom: 15px; min-width: 0; }

.sec { padding: 31px 15px 23px; }
.sec-first { padding-top: 16px; }
h3 { font-size: 16px; font-weight: 500; line-height: 22px; color: #3c434a; }
.sec p { margin-top: 3px; line-height: 20px; color: #646970; }

.row {
  display: grid;
  grid-template-columns: 270px 1fr;
  padding: 15px 15px 18px;
  border-bottom: 1px solid #f0f0f0;
}
.lbl { font-size: 14px; line-height: 20px; padding-top: 1px; color: #50575e; }
.row-icon { padding-top: 16px; padding-bottom: 19px; }
.row-sw { padding-bottom: 18.500px; }
.field {
  width: 361px;
  height: 30px;
  background: #f0f0f1;
  border: 1px solid #8c8f94;
  border-radius: 4px;
  padding: 0 9px;
  font-size: 14px;
  line-height: 28px;
  color: #2c3338;
}
.field-i { width: 360px; letter-spacing: .15px; }
.ph { color: #646970; }
.hint { margin-top: 2.500px; line-height: 21px; color: #646970; }
.hint-tight { margin-top: 1.500px; }
.hint a { color: #3858e9; text-decoration: underline; }
code {
  font: 12px "Liberation Mono", monospace;
  background: rgba(0, 0, 0, .07);
  padding: 3px 5px 2px;
  margin: 0 1px;
  letter-spacing: -.1px;
}
.icon-field { display: flex; gap: 1px; }
.addon { width: 29px; height: 30px; background: #dcdcde; display: flex; align-items: center; justify-content: center; color: #3c434a; }
.addon-w { width: 32px; }
.addon svg { width: 12px; height: 12px; }
.swatch {
  display: flex;
  width: 126px;
  height: 30px;
  margin-top: 1px;
  border: 1px solid #3858e9;
  border-radius: 3px;
  background: #f6f7f7;
  overflow: hidden;
}
.sw-c { width: 30px; border-right: 1px solid #c3c4c7; flex: none; }
.sw-black { background: #000; border-right-color: #000; }
.sw-t { font-size: 11px; line-height: 28px; padding-left: 7px; color: #50575e; white-space: nowrap; }
.row-sw .hint { margin-top: 7px; }

.img-box { width: 160px; height: 28px; background: #eee; margin-top: .500px; }
.upload-line { display: flex; margin-top: 10.500px; gap: 5px; }
.btn-sm {
  height: 30px;
  line-height: 28px;
  text-align: center;
  border: 1px solid #3858e9;
  border-radius: 3px;
  background: #f6f7f7;
}
.btn-up { width: 62px; }
.btn-cl { width: 51px; }

.row-width { padding-bottom: 19px; }
.wblock { height: 92px; border-bottom: 1px solid #f0f0f0; }
.wlabel { font-size: 14px; line-height: 19px; color: #50575e; }
.hint-end { margin-top: 2px; }

/* right column */
.box { background: #fff; border: 1px solid #c3c4c7; margin-bottom: 21px; }
.pub-prev { display: flex; justify-content: flex-end; padding: 10.500px 10px 0; }
.btn-prev {
  width: 172px;
  height: 29px;
  line-height: 27px;
  border: 1px solid #3858e9;
  border-radius: 3px;
  background: #f6f7f7;
  text-align: center;
}
.pub { padding-bottom: 9px; }
.pub-line { padding: 0 10px; }
.pub-line svg { width: 18px; height: 18px; fill: #3c434a; vertical-align: -4px; margin-right: 7px; }
.pub-line b { font-weight: 500; }
.pub-line a, .trash, .ads-link { text-decoration: underline; }
.pl-status { margin-top: 12.500px; }
.pl-vis { margin-top: 14px; }
.pl-date { margin-top: 14px; }
.pl-upd { margin-top: 12px; }
.pub-foot { background: #f6f7f7; border-top: 1px solid #dcdcde; padding: 16px 10px 10px; }
.trash { color: #b32d2e; display: block; }
.pub-act { display: flex; justify-content: flex-end; margin-top: 5px; }
.btn-primary {
  width: 100px;
  height: 32px;
  line-height: 32px;
  border-radius: 3px;
  background: #3858e9;
  color: #fff;
  text-align: center;
}
.worth { padding: 13px 12px 11px; }
.w-dis { color: #50575e; }
.w-check { display: flex; align-items: center; margin-top: 15px; color: #50575e; }
.w-check + .w-check { margin-top: 14px; }
.cb {
  display: inline-block;
  width: 16px;
  height: 16px;
  border: 1px solid #8c8f94;
  border-radius: 4px;
  background: #fff;
  margin-right: 8px;
  flex: none;
  vertical-align: -3px;
}
.cb-near { margin-right: 4px; }
.w-fmt { margin-top: 13px; font-weight: 500; color: #3c434a; }
.w-input { height: 30px; margin: -1px 0 0 1px; width: 254px; border: 1px solid #8c8f94; border-radius: 4px; }
.w-help { margin-top: 13px; color: #646970; }
.cookie { padding: 7px 12px 10px; color: #50575e; }
.ads { padding: 13px 12px 10px; color: #50575e; }
.ads-link { display: block; }
.ads-opts { margin-top: 13px; }
```
